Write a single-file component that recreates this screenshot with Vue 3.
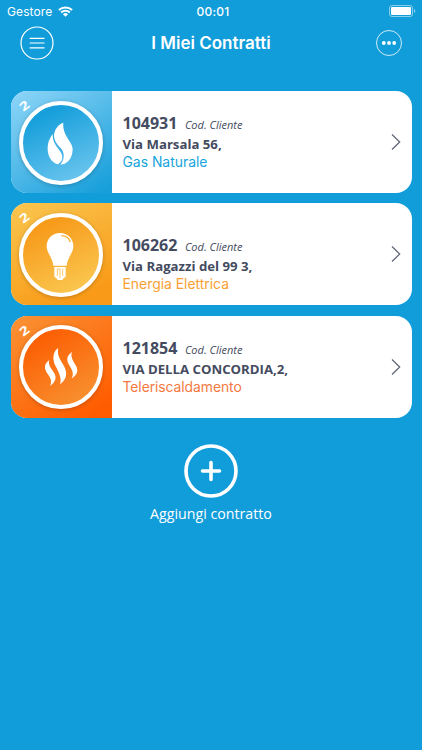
<script setup>
const contracts = [
  {
    code: '104931',
    address: 'Via Marsala 56,',
    service: 'Gas Naturale',
    type: 'gas'
  },
  {
    code: '106262',
    address: 'Via Ragazzi del 99 3,',
    service: 'Energia Elettrica',
    type: 'power'
  },
  {
    code: '121854',
    address: 'VIA DELLA CONCORDIA,2,',
    service: 'Teleriscaldamento',
    type: 'heat'
  }
]
</script>

<template>
  <div class="screen">
    <div class="status">
      <div class="carrier">
        <span>Gestore</span>
        <svg class="wifi" viewBox="0 0 15 11">
          <path d="M.9 4.1a9.6 9.6 0 0 1 13.2 0M3.2 6.5a6.2 6.2 0 0 1 8.6 0" />
          <path class="dot" d="M7.5 10.8 4.9 8.2a3.7 3.7 0 0 1 5.2 0z" />
        </svg>
      </div>
      <div class="time">00:01</div>
      <div class="battery">
        <svg viewBox="0 0 27 12">
          <rect class="shell" x=".5" y=".5" width="23" height="11" rx="2.5" />
          <rect x="2" y="2" width="20" height="8" rx="1" />
          <path class="cap" d="M25 4c1.7.5 1.7 3.5 0 4z" />
        </svg>
      </div>
    </div>

    <header class="header">
      <button class="round menu">
        <svg viewBox="0 0 34 34">
          <circle cx="17" cy="17" r="16" />
          <path d="M9.7 12.3h14.8M9.7 17h14.8M9.7 21.8h14.8" />
        </svg>
      </button>
      <h1>I Miei Contratti</h1>
      <button class="round more">
        <svg viewBox="0 0 26 26">
          <circle cx="13" cy="13" r="12.5" />
          <g class="dots">
            <circle cx="7.8" cy="13" r="1.9" />
            <circle cx="13" cy="13" r="1.9" />
            <circle cx="18.2" cy="13" r="1.9" />
          </g>
        </svg>
      </button>
    </header>

    <main class="list">
      <article v-for="item in contracts" :key="item.code" class="card" :class="item.type">
        <div class="tile">
          <span class="mark">2</span>
          <div class="ring">
            <svg v-if="item.type === 'gas'" viewBox="42 46 252 252">
              <path d="M175 111C158 116 149 133 147 147C147 163 155 175 167 187C180 201 179 222 166 237C187 237 203 217 203 190C203 169 171 148 175 111Z" />
              <path d="M143 145C133 159 128 171 128 190C128 211 139 230 158 236C169 231 175 219 170 206C165 190 142 177 143 145Z" />
            </svg>
            <svg v-else-if="item.type === 'power'" viewBox="44 44 252 252">
              <path d="M167 104C144 104 127 121 127 144C127 164 145 178 147 202H187C189 178 207 164 207 144C207 121 190 104 167 104Z" />
              <path class="shine" d="M171 112C184 112 194 119 198 131" />
              <path d="M150 206H184V234Q184 238 178 239L174 245H160L156 239Q150 238 150 234Z" />
              <path class="detail" d="M159 211V233M175 211V233M160 212H167V239" />
            </svg>
            <svg v-else viewBox="44 44 252 252">
              <path d="M162 113C144 124 144 149 154 168C165 189 173 207 167 222C187 207 190 190 180 169C168 147 157 136 162 113Z" />
              <path d="M135 149C119 160 119 174 128 188C139 202 144 214 137 227C154 214 158 202 149 187C139 171 131 164 135 149Z" />
              <path d="M203 125C186 136 186 151 195 165C205 181 209 191 202 205C220 193 223 180 214 165C205 149 198 140 203 125Z" />
            </svg>
          </div>
        </div>
        <div class="info">
          <div class="code">
            <strong>{{ item.code }}</strong>
            <em>Cod. Cliente</em>
          </div>
          <div class="address">{{ item.address }}</div>
          <div class="service">{{ item.service }}</div>
        </div>
        <svg class="chevron" viewBox="0 0 10 18">
          <path d="M1 1.5 8.7 9 1 16.5" />
        </svg>
      </article>
    </main>

    <button class="add">
      <svg viewBox="0 0 54 54">
        <circle cx="27" cy="27" r="25" />
        <path d="M27 18.5v17M18.5 27h17" />
      </svg>
      <span>Aggiungi contratto</span>
    </button>
  </div>
</template>

<style>
body {
  background: #119dda;
}
</style>

<style scoped>
.screen {
  width: 422px;
  height: 750px;
  overflow: hidden;
  background: #119dda;
  color: #fff;
  font-family: Inter, sans-serif;
}

button {
  padding: 0;
  border: 0;
  background: none;
  color: inherit;
}

svg {
  display: block;
  fill: none;
}

.status {
  display: grid;
  grid-template-columns: 1fr auto 1fr;
  align-items: center;
  height: 22px;
  padding: 0 6px 0 7px;
  font-size: 12px;
}

.carrier {
  display: flex;
  align-items: center;
  gap: 6px;
  letter-spacing: 0.1px;
}

.wifi {
  width: 15px;
  height: 11px;
  stroke: #fff;
  stroke-width: 2;
}

.wifi .dot {
  fill: #fff;
  stroke: none;
}

.time {
  padding-left: 3px;
  font-weight: 500;
  letter-spacing: 0.2px;
}

.battery svg {
  width: 27px;
  height: 12px;
  margin-left: auto;
  fill: #fff;
}

.battery .shell {
  fill: none;
  stroke: #fff;
  opacity: 0.5;
}

.battery .cap {
  opacity: 0.5;
}

.header {
  display: grid;
  grid-template-columns: 1fr auto 1fr;
  align-items: center;
  height: 42px;
  padding: 0 20px;
}

.header h1 {
  margin: 0;
  font-size: 17px;
  font-weight: 600;
  line-height: 22px;
}

.round svg {
  stroke: #fff;
}

.menu {
  justify-self: start;
}

.more {
  justify-self: end;
}

.menu svg {
  width: 34px;
  height: 34px;
  stroke-width: 1.2;
}

.more svg {
  width: 26px;
  height: 26px;
  stroke-width: 0.8;
}

.dots {
  fill: #fff;
  stroke: none;
}

.list {
  display: flex;
  flex-direction: column;
  gap: 10.4px;
  padding: 27px 10.5px 0;
}

.card {
  display: flex;
  align-items: center;
  height: 102px;
  border-radius: 16px;
  overflow: hidden;
  background: #fff;
  color: #444b60;
}

.tile {
  position: relative;
  display: flex;
  flex: none;
  align-items: center;
  justify-content: center;
  box-sizing: border-box;
  width: 101.5px;
  height: 102px;
  padding-top: 1px;
}

.mark {
  position: absolute;
  top: 8px;
  left: 10.5px;
  color: #fff;
  font: bold 12px/14px 'Open Sans', sans-serif;
  transform: rotate(-38deg) scale(1.35, 1);
}

.ring {
  box-sizing: border-box;
  width: 84px;
  height: 84px;
  border: 4.5px solid #fff;
  border-radius: 50%;
  box-shadow: 0 1px 4px rgba(0, 0, 0, 0.22);
}

.ring svg {
  width: 84px;
  height: 84px;
  margin: -4px -4.5px;
  fill: #fff;
}

.gas .tile {
  background: linear-gradient(145deg, #8fd6f8, #189fda 95%);
}

.gas .ring {
  background: linear-gradient(155deg, #169fdb 20%, #7bccf2) border-box;
}

.power .tile {
  background: linear-gradient(155deg, #f9c650, #f99b18 85%);
}

.power .ring {
  background: linear-gradient(155deg, #f79b1b 20%, #fbd05b) border-box;
}

.heat .tile {
  background: linear-gradient(145deg, #f99335, #ff5c00 90%);
}

.heat .ring {
  background: linear-gradient(150deg, #fc6005 20%, #f79b38) border-box;
}

.ring .shine {
  fill: none;
  stroke: #f9a929;
  stroke-width: 4;
}

.ring .detail {
  fill: none;
  stroke: #fac14b;
  stroke-width: 2.5;
}

.info {
  flex: 1;
  padding-left: 10.5px;
  font-family: 'Open Sans', sans-serif;
}

.code {
  display: flex;
  align-items: baseline;
  gap: 7.5px;
  line-height: 20px;
}

.code strong {
  font-size: 16px;
  font-weight: 700;
}

.code em {
  font-size: 11px;
}

.address {
  font-size: 13.2px;
  font-weight: 700;
  line-height: 18px;
}

.service {
  font-family: Inter, sans-serif;
  font-size: 13.9px;
  line-height: 18px;
}

.gas .service {
  color: #16a5dd;
}

.power .service {
  color: #f9a032;
}

.power .info {
  padding-top: 18.5px;
}

.heat .service {
  color: #f5793f;
  letter-spacing: -0.07px;
}

.chevron {
  width: 10px;
  height: 18px;
  margin-right: 11px;
  stroke: #5d6374;
  stroke-width: 1.2;
}

.add {
  display: flex;
  flex-direction: column;
  align-items: center;
  margin: 26px auto 0;
  font: 14.2px/20px 'Open Sans', sans-serif;
}

.add svg {
  width: 54px;
  height: 54px;
  margin-bottom: 6px;
  stroke: #fff;
  stroke-width: 3.6;
  stroke-linecap: round;
}
</style>
